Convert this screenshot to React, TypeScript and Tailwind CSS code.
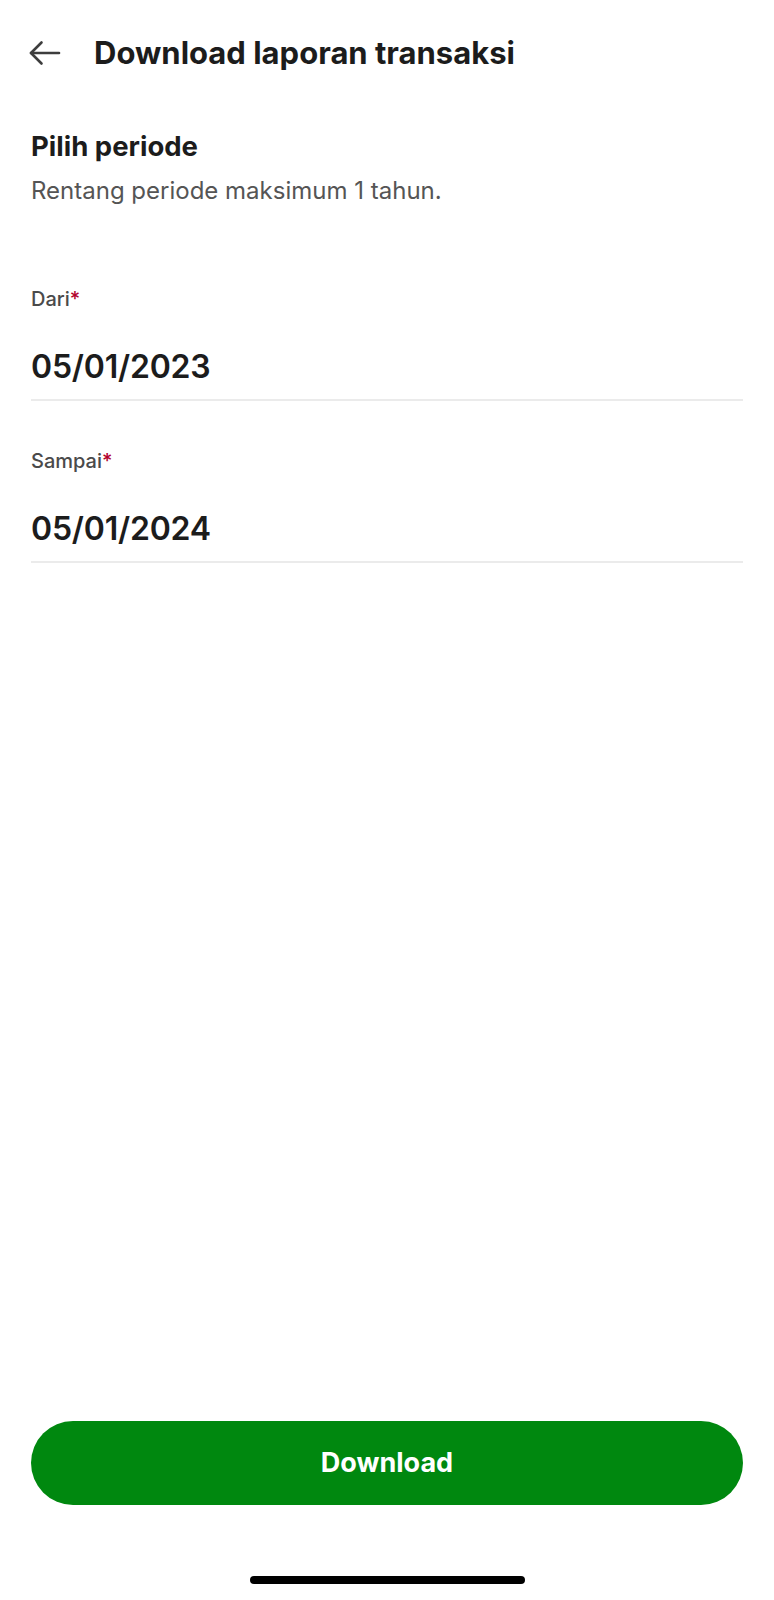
import { useState } from 'react'

interface DateFieldProps {
  label: string
  value: string
  className?: string
}

function DateField({ label, value, className = '' }: DateFieldProps) {
  return (
    <div className={className}>
      <div className="text-[20px] leading-[24px] font-medium text-[#4a4a4a]">
        {label}
        <span className="text-[#b3002d]">*</span>
      </div>
      <div className="mt-[36px] pb-[12px] border-b-2 border-[#ebebeb] text-[32px] leading-[40px] font-semibold text-[#1c1c1c] tracking-[-0.2px]">
        {value}
      </div>
    </div>
  )
}

export default function App() {
  const [from] = useState('05/01/2023')
  const [to] = useState('05/01/2024')

  return (
    <div className="min-h-[1600px] w-full bg-white flex flex-col font-['Inter','Noto_Sans',sans-serif]">
      <header className="h-[106px] flex items-center pl-[28px]">
        <button className="w-[33px] h-[33px] flex items-center justify-center text-[#3d3d3d]">
          <svg viewBox="0 0 33 26" width="33" height="26" fill="none" stroke="currentColor" strokeWidth="2.6" strokeLinecap="round" strokeLinejoin="round">
            <path d="M31 13H3" />
            <path d="M13.5 2.5L3 13l10.5 10.5" />
          </svg>
        </button>
        <h1 className="ml-[33px] text-[31px] leading-[36px] font-bold text-[#1c1c1c]">
          Download laporan transaksi
        </h1>
      </header>

      <main className="px-[31px] pt-[24px]">
        <h2 className="text-[27.5px] leading-[32px] font-bold text-[#1c1c1c]">Pilih periode</h2>
        <p className="mt-[14px] text-[24px] leading-[30px] text-[#555555]">
          Rentang periode maksimum 1 tahun.
        </p>

        <DateField label="Dari" value={from} className="mt-[81px]" />
        <DateField label="Sampai" value={to} className="mt-[48px]" />
      </main>

      <div className="flex-1" />

      <div className="px-[31px]">
        <button className="w-full h-[84px] rounded-full bg-[#00880f] text-white text-[27px] font-bold">
          Download
        </button>
      </div>

      <div className="pt-[71px] pb-[16px] flex justify-center">
        <div className="w-[275px] h-[8px] rounded-full bg-black" />
      </div>
    </div>
  )
}
